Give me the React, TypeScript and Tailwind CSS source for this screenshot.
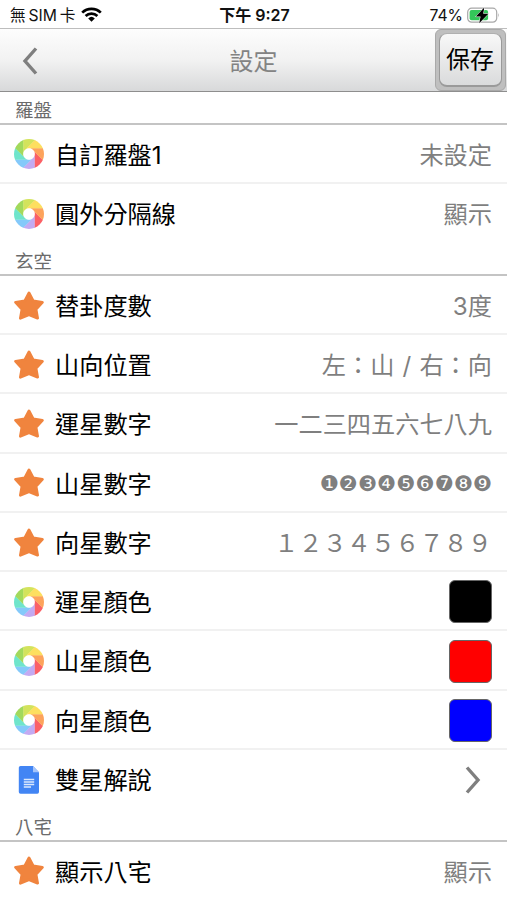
import type { ReactNode } from "react";
import { clsx } from "clsx";

type RowIcon = "wheel" | "star" | "doc";

interface Row {
  icon: RowIcon;
  label: string;
  value?: ReactNode;
}

interface Section {
  title: string;
  rows: Row[];
}

// clockwise, starting from the lower right blade
const BLADES = [
  "#fb6066",
  "#c3aaf2",
  "#84c9fa",
  "#6fe5cb",
  "#a2d95c",
  "#d3e35c",
  "#fddf5f",
  "#fda35c",
];

const SECTIONS: Section[] = [
  {
    title: "羅盤",
    rows: [
      { icon: "wheel", label: "自訂羅盤1", value: "未設定" },
      { icon: "wheel", label: "圓外分隔線", value: "顯示" },
    ],
  },
  {
    title: "玄空",
    rows: [
      { icon: "star", label: "替卦度數", value: "3度" },
      {
        icon: "star",
        label: "山向位置",
        value: <span className="[word-spacing:1.4px]">左：山 / 右：向</span>,
      },
      { icon: "star", label: "運星數字", value: "一二三四五六七八九" },
      {
        icon: "star",
        label: "山星數字",
        value: (
          <span className="block pb-[2px] font-['DejaVu_Sans',sans-serif] text-[21.4px] leading-none">
            ❶❷❸❹❺❻❼❽❾
          </span>
        ),
      },
      { icon: "star", label: "向星數字", value: "１２３４５６７８９" },
      { icon: "wheel", label: "運星顏色", value: <Swatch className="bg-black" /> },
      { icon: "wheel", label: "山星顏色", value: <Swatch className="bg-[#ff0000]" /> },
      { icon: "wheel", label: "向星顏色", value: <Swatch className="bg-[#0000ff]" /> },
      { icon: "doc", label: "雙星解說", value: <ChevronRight /> },
    ],
  },
  {
    title: "八宅",
    rows: [{ icon: "star", label: "顯示八宅", value: "顯示" }],
  },
];

function Swatch({ className }: { className: string }) {
  return (
    <span
      className={clsx(
        "block h-[43px] w-[43px] rounded-[6px] border border-[#666]",
        className
      )}
    />
  );
}

function ChevronRight() {
  return (
    <svg width="16" height="28" viewBox="0 0 16 28" className="mr-[11px]">
      <path d="M2 1.5 L13 14 L2 26.5" fill="none" stroke="#7f7f7f" strokeWidth="3.4" />
    </svg>
  );
}

function WheelIcon() {
  return (
    <svg width="30" height="30" viewBox="-15 -15 30 30">
      <clipPath id="wheel-clip">
        <circle r="15" />
      </clipPath>
      <g clipPath="url(#wheel-clip)">
        {BLADES.map((color, i) => (
          <path
            key={color}
            d="M5.5 -2.3 V20 H27.8 Z"
            fill={color}
            stroke={color}
            strokeWidth="0.3"
            transform={`rotate(${i * 45})`}
          />
        ))}
      </g>
      <circle r="5.8" fill="#fff" />
    </svg>
  );
}

function StarIcon() {
  return (
    <svg width="30" height="30" viewBox="0 0 30 30">
      <path
        d="M15 2 L19.2 10 L28.4 11.3 L22 18.2 L23.6 27.2 L15 23.6 L6.4 27.2 L8 18.2 L1.6 11.3 L10.8 10 Z"
        fill="#f0843e"
        stroke="#f0843e"
        strokeWidth="2.8"
        strokeLinejoin="round"
      />
    </svg>
  );
}

function DocIcon() {
  return (
    <svg width="30" height="30" viewBox="0 0 30 30">
      <path
        d="M6.5 1 H19 L25 7.3 V27 Q25 28.7 23.3 28.7 H6.5 Q4.8 28.7 4.8 27 V2.7 Q4.8 1 6.5 1 Z"
        fill="#4285f4"
      />
      <path d="M19 1 L25 7.3 H19 Z" fill="#a6c5fa" />
      <path
        d="M9.8 14.5 H20.2 M9.8 17 H20.2 M9.8 19.5 H20.2 M9.8 22 H17"
        stroke="#dce9fd"
        strokeWidth="1.3"
      />
    </svg>
  );
}

const ICONS: Record<RowIcon, () => ReactNode> = {
  wheel: WheelIcon,
  star: StarIcon,
  doc: DocIcon,
};

function StatusBar() {
  return (
    <div className="grid h-7 grid-cols-3 items-center pl-[10px] pr-[7px] font-[Inter,'Noto_Sans_CJK_TC',sans-serif] text-[16px] leading-none text-[#111]">
      <div className="flex items-center gap-[6px] pt-[2px]">
        <span className="whitespace-nowrap pt-px text-[15.7px] [word-spacing:-1.6px]">
          無 SIM 卡
        </span>
        <svg width="21" height="15" viewBox="0 0 21 15">
          <g fill="none" stroke="#000" strokeWidth="2.7">
            <path d="M1.2 5.6 A13.3 13.3 0 0 1 19.8 5.6" />
            <path d="M4.6 9 A8.5 8.5 0 0 1 16.4 9" />
          </g>
          <path d="M10.5 14.8 L7.2 11.4 A4.8 4.8 0 0 1 13.8 11.4 Z" />
        </svg>
      </div>
      <div className="whitespace-nowrap pr-px pt-[2px] text-center font-semibold">下午 9:27</div>
      <div className="flex items-center justify-end gap-[4px] pt-[2px]">
        <span className="pt-px text-[15.7px]">74%</span>
        <svg width="33" height="17" viewBox="0 0 33 17">
          <rect x="0.7" y="1.2" width="29" height="14" rx="4" fill="#fff" stroke="#a8a8a8" strokeWidth="1.2" />
          <path d="M31.3 6 Q33 8.2 31.3 10.4 Z" fill="#a8a8a8" />
          <rect x="2.6" y="3.1" width="18.5" height="10.2" rx="2" fill="#34c759" />
          <path
            d="M17.3 0.6 L8.8 9.6 H13.6 L12.2 16.2 L21.4 6.8 H16.2 Z"
            fill="#000"
            stroke="#fff"
            strokeWidth="1"
            paintOrder="stroke"
          />
        </svg>
      </div>
    </div>
  );
}

function Header() {
  return (
    <header className="grid h-16 grid-cols-[1fr_auto_1fr] items-center border-y border-t-[#bdbdbd] border-b-[#8e8e8e] bg-linear-to-b from-[#fdfdfd] via-[#f2f2f2] to-[#d8d9da]">
      <svg width="16" height="28" viewBox="0 0 16 28" className="ml-[22px] mt-[2px]">
        <path d="M14 1.5 L3 14 L14 26.5" fill="none" stroke="#7f7f7f" strokeWidth="3.4" />
      </svg>
      <h1 className="pt-[3px] text-[24px] leading-none text-[#838383]">設定</h1>
      <div className="flex justify-end pr-px">
        <div className="h-[62px] w-[71px] rounded-[6px] border border-[#a9a9a9] bg-[#bfbfbf] p-[3px]">
          <button className="flex h-full w-full items-center justify-center rounded-[8px] border border-b-2 border-[#9a9a9a] border-t-[#b0b0b0] bg-linear-to-b from-[#f8f8f8] to-[#dadbdc] pt-px pr-px text-[24px] leading-none text-black">
            保存
          </button>
        </div>
      </div>
    </header>
  );
}

function SettingRow({ icon, label, value, last }: Row & { last: boolean }) {
  const Icon = ICONS[icon];
  return (
    <div
      className={clsx(
        "flex h-[59.25px] items-center border-b-2 pl-[14px] pr-[15px] pt-[2px] text-[24.2px] leading-none",
        last ? "border-transparent" : "border-[#f1f1f1]"
      )}
    >
      <Icon />
      <span className="ml-[11px] pt-[3px] text-black">{label}</span>
      <div
        className={clsx(
          "ml-auto whitespace-nowrap text-[#7f7f7f]",
          (icon === "star" || typeof value === "string") && "pt-[3px]"
        )}
      >
        {value}
      </div>
    </div>
  );
}

export default function App() {
  return (
    <div className="h-[900px] overflow-hidden bg-white font-[Inter,'Noto_Sans_CJK_TC',sans-serif]">
      <StatusBar />
      <Header />
      {SECTIONS.map((section) => (
        <section key={section.title}>
          <h2 className="flex h-[32.7px] items-center border-b-2 border-[#c4c4c4] pl-[15px] pt-[5px] text-[18.5px] leading-none text-[#6b6b6b]">
            {section.title}
          </h2>
          {section.rows.map((row, i) => (
            <SettingRow key={row.label} {...row} last={i === section.rows.length - 1} />
          ))}
        </section>
      ))}
    </div>
  );
}
